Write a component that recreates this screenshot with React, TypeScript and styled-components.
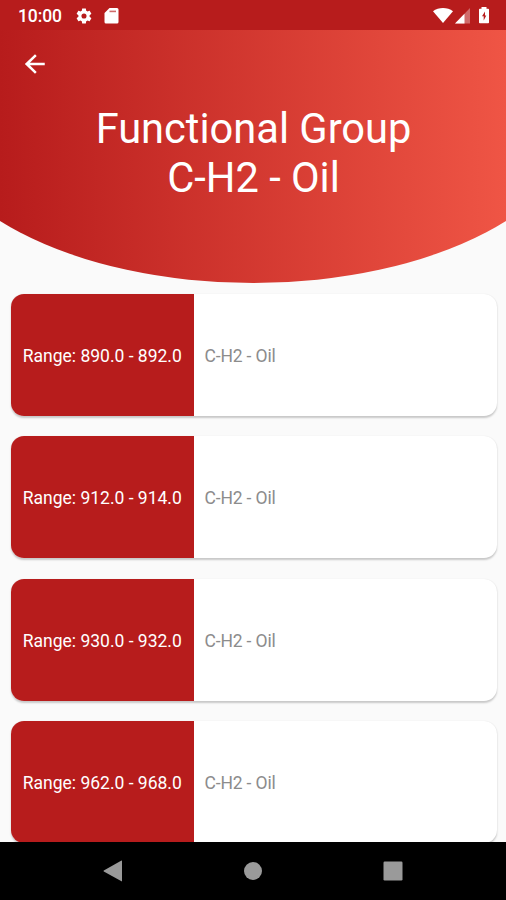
import React from 'react';
import styled, { createGlobalStyle } from 'styled-components';

const GlobalStyle = createGlobalStyle`
  *, *::before, *::after { box-sizing: border-box; }
  body { margin: 0; background: #fafafa; font-family: Roboto, "Liberation Sans", sans-serif; }
`;

const Screen = styled.div`
  width: 506px;
  height: 900px;
  display: flex;
  flex-direction: column;
  overflow: hidden;
  background: #fafafa;
`;

const StatusBar = styled.div`
  height: 30px;
  flex: none;
  display: flex;
  align-items: center;
  justify-content: space-between;
  padding: 1px 16px 0 18px;
  background: #b71c1c;
  color: #fff;
`;

const StatusGroup = styled.div`
  display: flex;
  align-items: center;
`;

const Clock = styled.span`
  width: 57px;
  font-size: 17.5px;
  letter-spacing: -0.1px;
  font-weight: 500;
  line-height: 30px;
`;

const StatusIcon = styled.svg<{ $gap?: number }>`
  display: block;
  fill: #fff;
  margin-left: ${({ $gap = 0 }) => $gap}px;
`;

const Header = styled.header`
  height: 253px;
  flex: none;
  display: flex;
  flex-direction: column;
  color: #fff;
  background: linear-gradient(90deg, #b71c1c, #ef5545);
  clip-path: ellipse(330px 173px at 50% 80px);
`;

const BackButton = styled.button`
  width: 34px;
  height: 34px;
  margin: 17px 0 0 18px;
  padding: 4px;
  border: 0;
  background: none;
  color: inherit;
  svg { display: block; fill: currentColor; }
`;

const Title = styled.h1`
  margin: 23px 0 0;
  padding-left: 1px;
  font-size: 41.6px;
  line-height: 49.4px;
  font-weight: 400;
  text-align: center;
`;

const List = styled.main`
  flex: 1;
  min-height: 0;
  overflow: hidden;
  display: flex;
  flex-direction: column;
  gap: 20.5px;
  padding: 10.6px 9.5px 0 10.6px;
`;

const Card = styled.article`
  height: 122px;
  flex: none;
  display: flex;
  border-radius: 13px;
  overflow: hidden;
  background: #fff;
  box-shadow: 0 1.3px 2px rgba(0, 0, 0, 0.2), 0 0 1px rgba(0, 0, 0, 0.06);
`;

const Range = styled.div`
  width: 183.4px;
  flex: none;
  display: flex;
  align-items: center;
  justify-content: center;
  padding-top: 2px;
  background: #b71c1c;
  color: #fff;
  font-size: 17.5px;
  white-space: nowrap;
`;

const GroupName = styled.div`
  display: flex;
  align-items: center;
  padding: 2px 0 0 10.5px;
  color: #8c8c8c;
  font-size: 17.5px;
  letter-spacing: -0.15px;
`;

const NavBar = styled.nav`
  height: 58px;
  flex: none;
  display: grid;
  grid-template-columns: repeat(3, 140px);
  justify-content: center;
  justify-items: center;
  align-items: center;
  background: #000;
  svg { display: block; fill: #9a9a9a; }
`;

const ranges = ['890.0 - 892.0', '912.0 - 914.0', '930.0 - 932.0', '962.0 - 968.0'];

export default function App() {
  return (
    <Screen>
      <GlobalStyle />
      <StatusBar>
        <StatusGroup>
          <Clock>10:00</Clock>
          <StatusIcon width="18" height="18" viewBox="0 0 24 24">
            <path
              fillRule="evenodd"
              d="M19.4 13c.1-.3.1-.6.1-1s0-.7-.1-1l2.2-1.7c.2-.1.2-.4.1-.6l-2-3.5c-.1-.2-.4-.3-.6-.2l-2.5 1c-.5-.4-1.1-.7-1.7-1l-.4-2.6c0-.2-.2-.4-.5-.4h-4c-.2 0-.5.2-.5.4l-.4 2.6c-.6.3-1.2.6-1.7 1l-2.5-1c-.2-.1-.5 0-.6.2l-2 3.5c-.1.2-.1.5.1.6L4.6 11c-.1.3-.1.7-.1 1s0 .7.1 1l-2.2 1.7c-.2.1-.2.4-.1.6l2 3.5c.1.2.4.3.6.2l2.5-1c.5.4 1.1.7 1.7 1l.4 2.6c0 .2.3.4.5.4h4c.3 0 .5-.2.5-.4l.4-2.6c.6-.3 1.2-.6 1.7-1l2.5 1c.2.1.5 0 .6-.2l2-3.5c.1-.2.1-.5-.1-.6L19.4 13ZM12 15.4a3.4 3.4 0 1 1 0-6.8 3.4 3.4 0 0 1 0 6.8Z"
            />
          </StatusIcon>
          <StatusIcon $gap={11} width="15" height="16" viewBox="0 0 15 16">
            <path d="M5.5 0H13a1.5 1.5 0 0 1 1.5 1.5V14a1.5 1.5 0 0 1-1.5 1.5H2A1.5 1.5 0 0 1 .5 14V5Z" />
            <path d="M5.5 2.600H12V4.200H5.500Z" fill="#b71c1c" opacity=".65" />
          </StatusIcon>
        </StatusGroup>
        <StatusGroup>
          <StatusIcon width="20" height="16" viewBox="0 0 20 16">
            <path d="M0 3.300C5.500-1 14.500-1 20 3.300L10 15Z" />
          </StatusIcon>
          <StatusIcon $gap={2} width="15" height="16" viewBox="0 0 15 16">
            <path d="M15 0V15.500H0Z" opacity=".35" />
            <path d="M9.500 5.700V15.500H0Z" />
          </StatusIcon>
          <StatusIcon $gap={8} width="12" height="17" viewBox="0 0 12 17">
            <path
              fillRule="evenodd"
              d="M3.500 0h5v1.700h1.700c.5 0 .8.3.8.8v13c0 .5-.3.8-.8.8H1.800c-.5 0-.8-.3-.8-.8v-13c0-.5.3-.8.8-.8h1.700ZM7 4.500 4 9.200h1.700v4.200l2.600-4.900H7Z"
            />
          </StatusIcon>
        </StatusGroup>
      </StatusBar>
      <Header>
        <BackButton aria-label="Back">
          <svg width="26" height="26" viewBox="0 0 24 24">
            <path d="M21 10.800H7.300l6.300-6.100L12 3 2.600 12 12 21l1.600-1.700-6.300-6.100H21Z" />
          </svg>
        </BackButton>
        <Title>
          Functional Group
          <br />
          C-H2 - Oil
        </Title>
      </Header>
      <List>
        {ranges.map((range) => (
          <Card key={range}>
            <Range>Range: {range}</Range>
            <GroupName>C-H2 - Oil</GroupName>
          </Card>
        ))}
      </List>
      <NavBar>
        <svg width="21" height="22" viewBox="0 0 21 22">
          <path d="M18.500.600Q19 .300 19 1V21Q19 21.700 18.500 21.300L.800 11.500Q.200 11 .800 10.500Z" />
        </svg>
        <svg width="18" height="18" viewBox="0 0 18 18">
          <circle cx="9" cy="9" r="9" />
        </svg>
        <svg width="20" height="20" viewBox="0 0 20 20">
          <rect x=".5" y=".5" width="19" height="19" rx="1.200" />
        </svg>
      </NavBar>
    </Screen>
  );
}
